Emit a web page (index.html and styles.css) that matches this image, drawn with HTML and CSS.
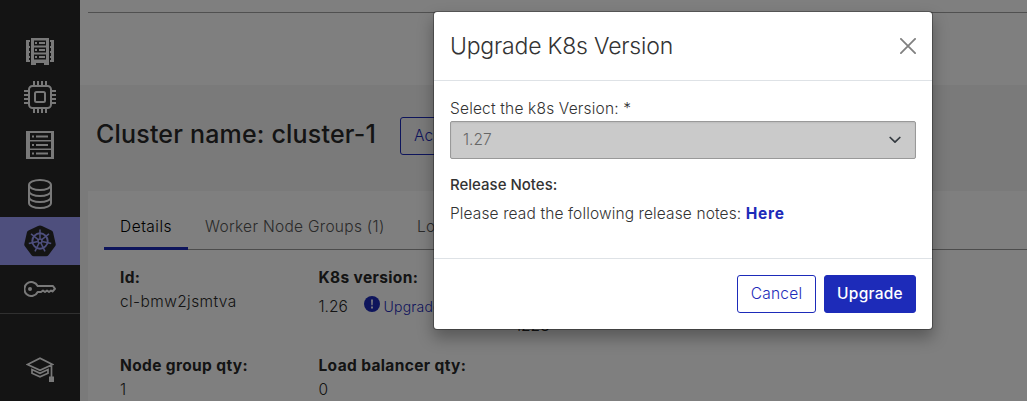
FILE: index.html
```html
<!DOCTYPE html>
<html lang="en">
<head>
<meta charset="utf-8">
<title>Upgrade K8s Version</title>
<link rel="stylesheet" href="styles.css">
</head>
<body>
<div class="app">
  <nav class="sidebar">
    <a class="nav-item servers"><svg width="28" height="27" viewBox="0 0 28 27"><path fill="#f2f2f2" d="M5 0h18v27h-5v-2h-8v2H5zM0 2h4v2H3v4h1v2H3v3h1v2H3v3h1v2H3v2h1v2H0zM28 2h-4v2h1v4h-1v2h1v3h-1v2h1v3h-1v2h1v2h-1v2h4z"/><path fill="#282828" d="M8 2.500h12v5H8zM8 9.500h12v5H8zM8 16.500h12v5H8z"/><path fill="#f2f2f2" d="M9 4h2v2H9zM13 4h6v2h-6zM9 11h2v2H9zM13 11h6v2h-6zM9 18h2v2H9zM13 18h6v2h-6z"/></svg></a>
    <a class="nav-item"><svg width="32" height="32" viewBox="0 0 32 32" fill="none" stroke="#f2f2f2" stroke-width="2"><rect x="5" y="5" width="22" height="22" rx="3.500"/><rect x="11" y="11" width="10" height="10" rx="1.500"/><path d="M10 0v5M14 0v5M18 0v5M22 0v5M10 27v5M14 27v5M18 27v5M22 27v5M0 10h5M0 14h5M0 18h5M0 22h5M27 10h5M27 14h5M27 18h5M27 22h5"/></svg></a>
    <a class="nav-item"><svg width="28" height="28" viewBox="0 0 28 28"><path fill="#f2f2f2" d="M0 0h28v28H0z"/><path fill="#282828" d="M4 2h21v7H4zM4 10.500h21v7H4zM4 19h21v7H4z"/><g fill="#f2f2f2"><path d="M6 4.500h2v2H6zM10 4.500h12v2H10zM6 13h2v2H6zM10 13h12v2H10zM6 21.500h2v2H6zM10 21.500h12v2H10z"/></g></svg></a>
    <a class="nav-item database"><svg width="24" height="30" viewBox="0 0 24 30" fill="none" stroke="#f2f2f2" stroke-width="2"><ellipse cx="12" cy="6" rx="11" ry="5"/><path d="M1 6v18c0 2.800 5 5 11 5s11-2.200 11-5V6M1 12c0 2.800 5 5 11 5s11-2.200 11-5M1 18c0 2.800 5 5 11 5s11-2.200 11-5"/></svg></a>
    <a class="nav-item active"><svg width="32" height="32" viewBox="0 0 32 32"><path fill="#282828" d="M16 .5q1 0 2 .5l9.500 4.600q1.300.7 1.600 2L31.700 19q.2 1.200-.6 2.200l-6.700 9q-.8 1-2.200 1H9.800q-1.400 0-2.200-1l-6.700-9Q.1 20.200.3 19L2.900 7.600q.3-1.300 1.600-2L14 1q1-.5 2-.5z"/><g fill="none" stroke="#9c9efb" stroke-width="1.500"><circle cx="16" cy="16" r="7.700" stroke-width="1.900"/><path d="M16 4.500v9.200"/><path d="M16 4.500v9.200" transform="rotate(51.430 16 16)"/><path d="M16 4.500v9.200" transform="rotate(102.860 16 16)"/><path d="M16 4.500v9.200" transform="rotate(154.290 16 16)"/><path d="M16 4.500v9.200" transform="rotate(205.710 16 16)"/><path d="M16 4.500v9.200" transform="rotate(257.140 16 16)"/><path d="M16 4.500v9.200" transform="rotate(308.570 16 16)"/><circle cx="16" cy="16" r="2"/></g></svg></a>
    <a class="nav-item"><svg width="32" height="16" viewBox="0 0 32 16" fill="none" stroke="#f2f2f2" stroke-width="2" stroke-linejoin="round"><path d="M13.700 5H29l2 2.800-2.500 2.700-1.500-1-2 1.500-2-1.500-2 1.500-2-1.500-2 1.500h-3.300A7 7 0 1 1 13.700 5z"/><circle cx="6" cy="8" r="2" fill="#f2f2f2" stroke="none"/></svg></a>
    <hr class="nav-rule">
    <a class="nav-item learn"><svg width="28" height="25" viewBox="0 0 28 25" fill="none" stroke="#f2f2f2" stroke-width="1.700"><path d="M1.500 7.500L14 1.300l12.500 6.200L14 13.300zM25.500 8v12M6 12.500v3.700l8 3.500 8-3.500v-3.700l-8 3.700z"/><path fill="#f2f2f2" stroke="none" d="M23 19.500h5V25h-5z"/></svg></a>
  </nav>
  <main class="main">
    <section class="top"><hr class="top-rule"></section>
    <header class="head">
      <h1 class="title">Cluster name: cluster-1</h1>
      <button class="btn outline actions">Ac</button>
    </header>
    <section class="panel">
      <div class="tabs">
        <span class="tab current">Details</span><span class="tab workers">Worker Node Groups (1)</span><span class="tab">Lo</span>
      </div>
      <div class="details">
        <div><b class="label">Id:</b><div class="value v-id">cl-bmw2jsmtva</div></div>
        <div><b class="label">K8s version:</b><div class="value version"><span class="v-num">1.26</span><svg class="alert" width="16" height="16" viewBox="0 0 16 16"><circle cx="8" cy="8" r="8" fill="#1d2bb9"/><path fill="#e8e8ff" d="M7 3.500h2l-.3 5.700H7.300zM7 10.600h2v2H7z"/></svg><a class="upgrade-link">Upgrade</a></div></div>
        <div><div class="value created">1228</div></div>
        <div><b class="label">Node group qty:</b><div class="value">1</div></div>
        <div><b class="label">Load balancer qty:</b><div class="value">0</div></div>
      </div>
    </section>
  </main>
</div>
<div class="backdrop">
  <div class="modal">
    <div class="modal-head"><h2 class="modal-title">Upgrade K8s Version</h2>
      <svg class="close" width="16" height="16" viewBox="0 0 16 16" stroke="#808080" stroke-width="1.800" stroke-linecap="round"><path d="M.9.900l14.200 14.200M15.100.9L.9 15.100"/></svg></div>
    <div class="modal-body">
      <label class="field-label">Select the k8s Version: *</label>
      <div class="select"><span class="sel">1.27</span><svg width="12" height="8" viewBox="0 0 12 8" fill="none" stroke="#343a40" stroke-width="1.700" stroke-linecap="round" stroke-linejoin="round"><path d="M1.200 1.500L6 6.200l4.800-4.700"/></svg></div>
      <b class="notes-title">Release Notes:</b>
      <p class="notes">Please read the following release notes: <a class="here">Here</a></p>
    </div>
    <div class="modal-foot"><button class="btn outline cancel">Cancel</button><button class="btn primary">Upgrade</button></div>
  </div>
</div>
</body>
</html>
```
FILE: styles.css
```css
* { box-sizing: border-box; }
body { margin: 0; height: 401px; overflow: hidden; font: 350 15.5px/24px Inter, "Open Sans", sans-serif; color: #282828; background: #fff; }
.app { display: flex; height: 401px; overflow: hidden; }
.sidebar { width: 80px; height: 401px; padding-top: 25px; background: #282828; flex: none; }
.nav-item { display: flex; height: 48px; align-items: center; justify-content: center; }
.servers { padding-top: 4px; }
.database { padding-top: 2px; }
.nav-item.active { background: #9c9efb; }
.nav-rule { height: 1px; margin: 0; border: 0; background: #606060; }
.learn { margin-top: 31px; }
.main { flex: 1; background: #f4f4f4; min-width: 0; }
.top { height: 85px; padding: 12px 0 0 8px; background: #fff; }
.top-rule { height: 1px; margin: 0; border: 0; background: #a0a0a0; }
.head { display: flex; height: 106px; padding: 32px 0 0 16px; gap: 24px; align-items: flex-start; }
.title { width: 280px; margin: 0; font-weight: 540; font-size: 25px; line-height: 34px; white-space: nowrap; letter-spacing: .19px; }
.btn { height: 38px; padding: 0; border: 1px solid #1d2bb9; border-radius: 3px; font: 350 15.5px/24px Inter, "Open Sans", sans-serif; letter-spacing: .25px; background: transparent; color: #1d2bb9; }
.actions { width: 81px; padding-left: 13px; text-align: left; }
.panel { height: 230px; margin-left: 8px; padding-top: 16px; background: #fff; }
.tabs { display: flex; height: 43px; margin-left: 16px; box-shadow: inset 0 -1px #999; }
.tab { padding: 8px 16px 8px; color: #555; white-space: nowrap; letter-spacing: .29px; }
.tab.current { width: 84px; color: #000; border-bottom: 3px solid #1d2bb9; letter-spacing: .5px; }
.workers { width: 213px; padding-left: 17px; }
.details { display: grid; grid-template-columns: repeat(3, 198.500px); grid-template-rows: 88px 64px; padding: 16px 0 0 32px; }
.label { display: block; font-weight: 700; white-space: nowrap; letter-spacing: .36px; }
.v-id { letter-spacing: .4px; }
.version { display: flex; align-items: center; padding-top: 4px; }
.v-num { width: 29px; padding-top: 1px; }
.alert { margin: -5px 4px 0 16px; }
.upgrade-link { font-size: 14px; line-height: 22px; letter-spacing: .2px; color: #1d2bb9; }
.created { padding-top: 48px; margin-left: -2px; }
.backdrop { position: absolute; inset: 0; background: rgba(0,0,0,.5); }
.modal { position: absolute; left: 433px; top: 11px; width: 500px; height: 319px; border: 1px solid rgba(0,0,0,.3); border-radius: 4px; background: #fff; background-clip: padding-box; box-shadow: 0 8px 16px rgba(0,0,0,.3); color: #333; }
.modal-head { display: flex; height: 69px; padding: 0 16px; align-items: center; justify-content: space-between; border-bottom: 1px solid #dee2e6; }
.modal-title { margin: 0; font-size: 23px; line-height: 36px; font-weight: 340; white-space: nowrap; letter-spacing: -.2px; }
.modal-body { height: 177px; padding: 16px; }
.field-label { display: block; letter-spacing: .18px; }
.select { display: flex; height: 38px; padding: 0 14px 0 12px; align-items: center; justify-content: space-between; border: 1px solid #999; border-radius: 2px; background: #cacaca; color: #666; box-shadow: inset 0 1px 2px rgba(0,0,0,.07); }
.notes-title { display: block; margin-top: 14px; font-size: 15px; font-weight: 550; }
.notes { margin: 5px 0 0; white-space: nowrap; letter-spacing: .12px; }
.here { font-weight: 700; letter-spacing: .7px; color: #1d2bb9; }
.modal-foot { display: flex; height: 71px; padding: 16px; gap: 8px; justify-content: flex-end; border-top: 1px solid #dee2e6; }
.cancel { width: 79px; }
.primary { width: 92px; background: #1d2bb9; color: #fff; font-weight: 550; }
```
